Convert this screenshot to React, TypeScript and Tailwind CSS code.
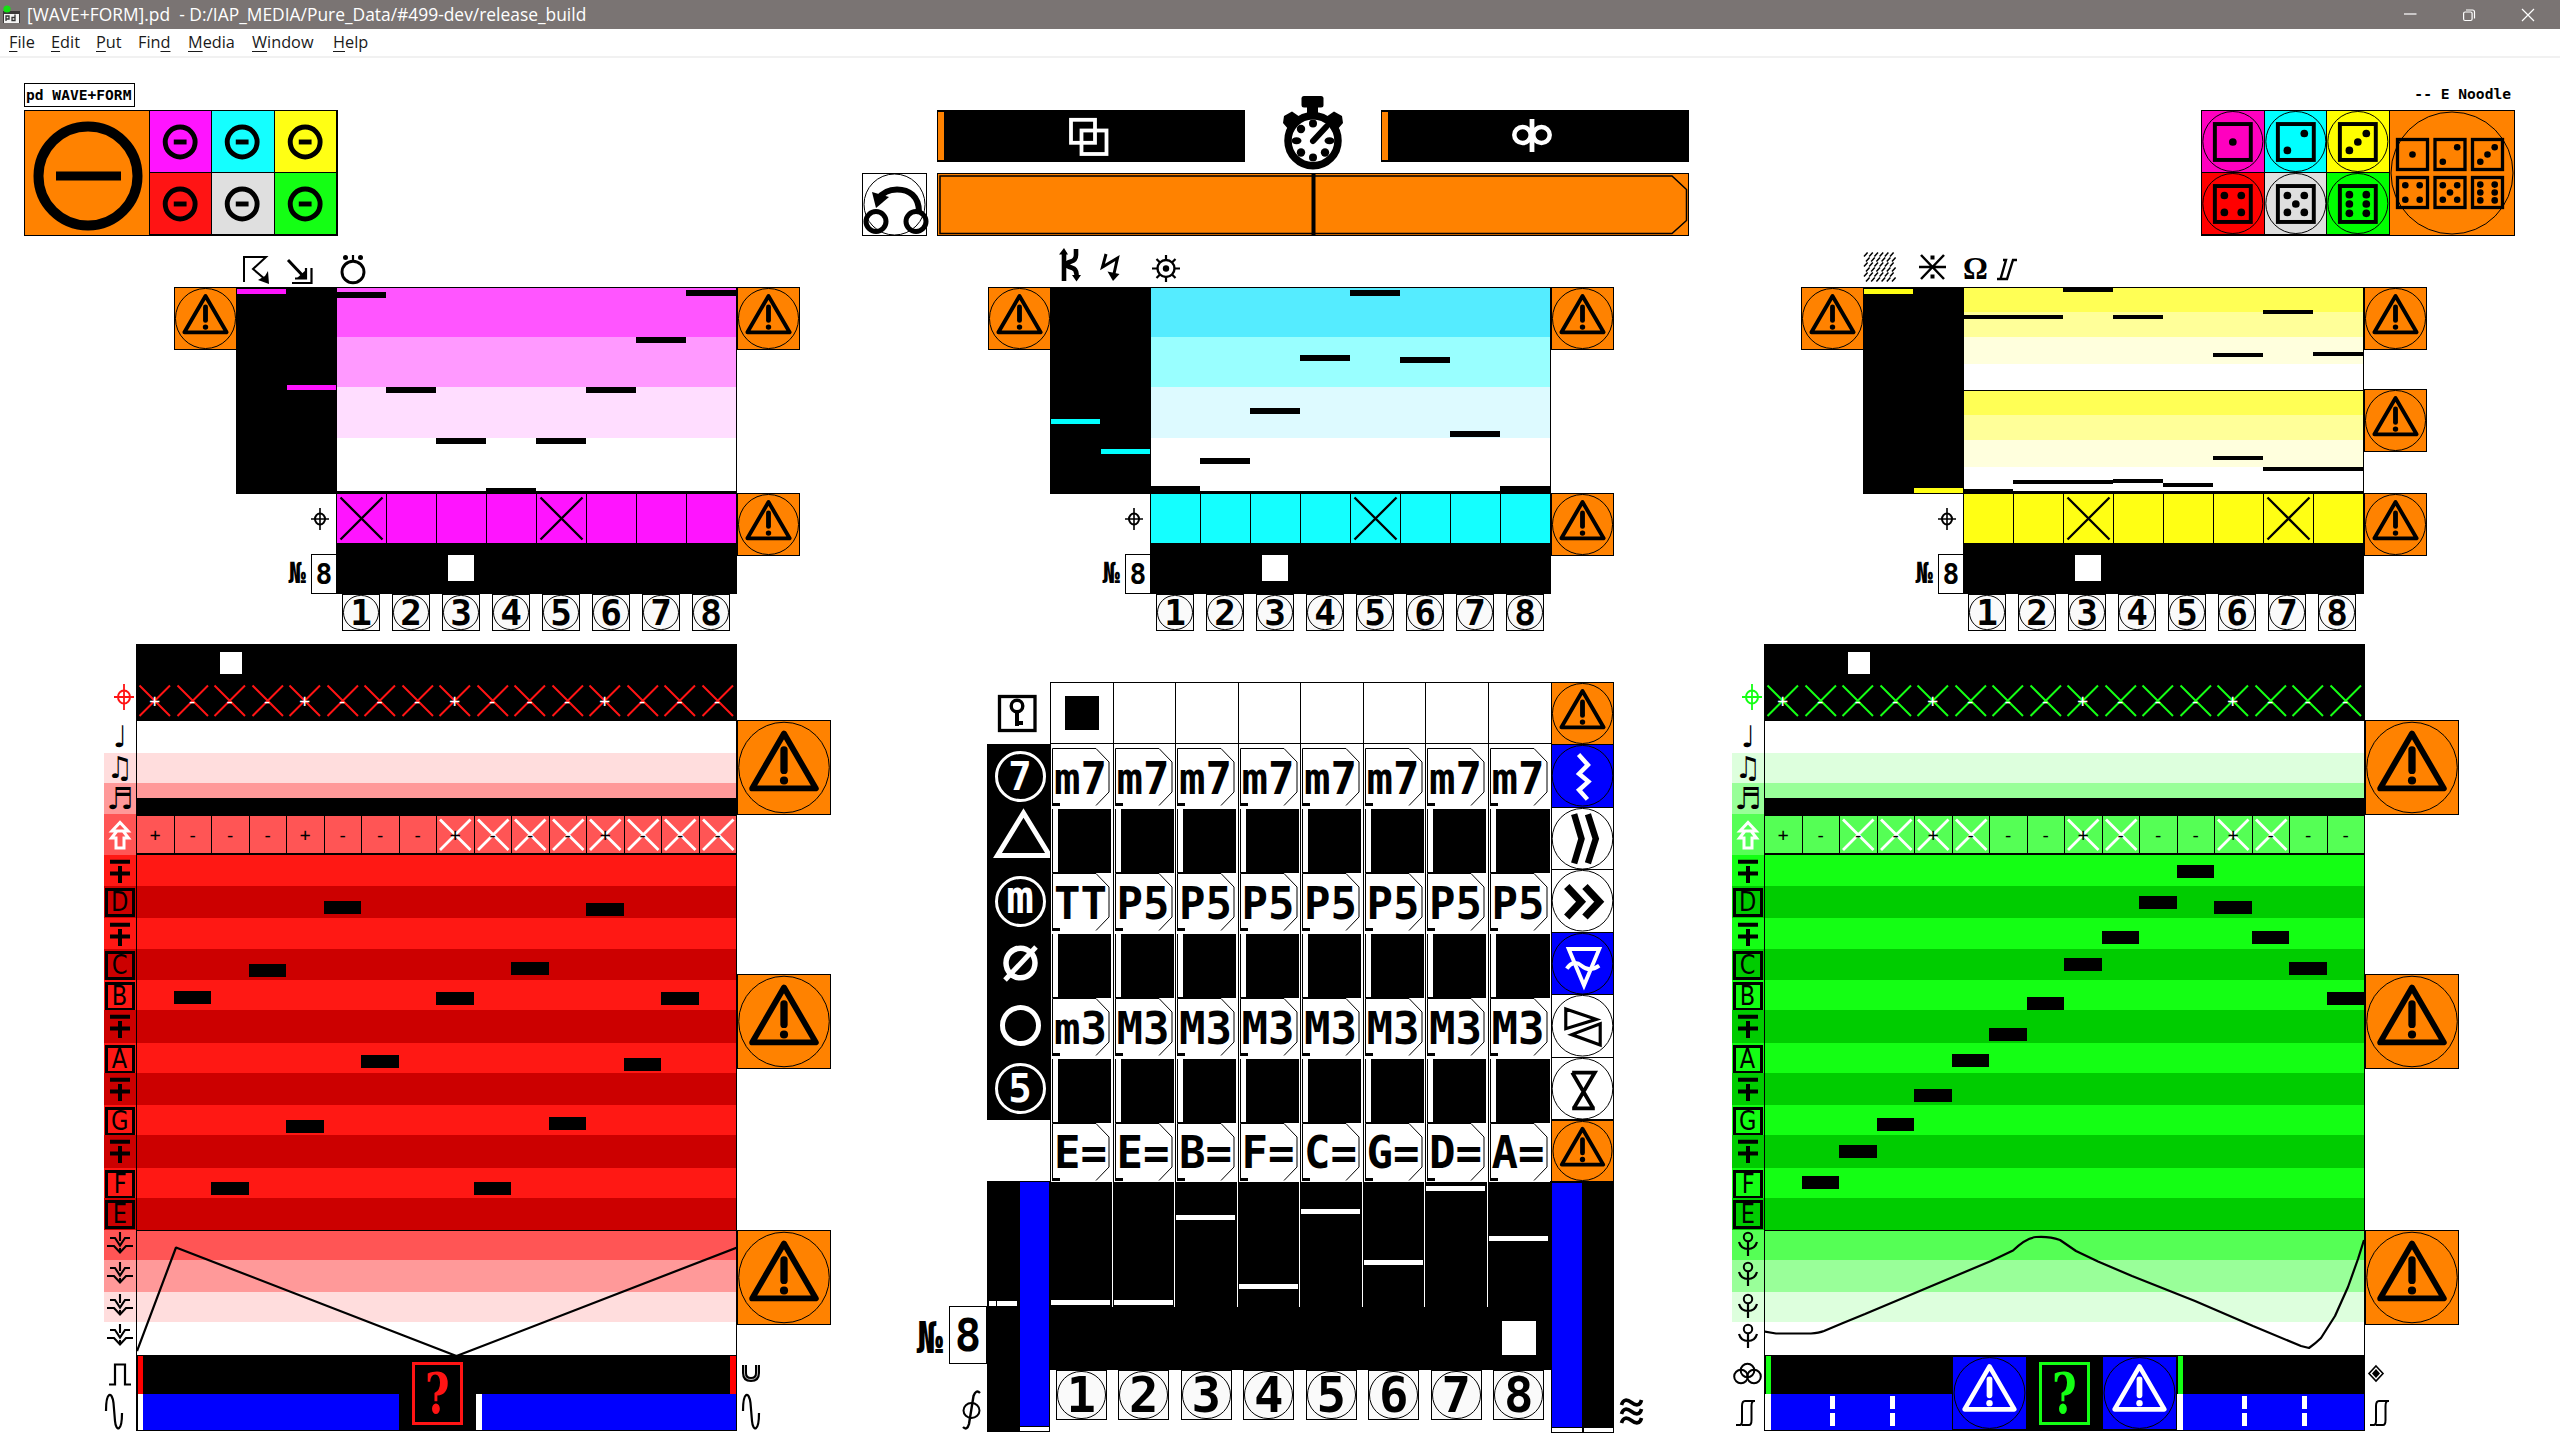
import React from "react";

type Kids = { children?: React.ReactNode };

/* ---------- small drawings ---------- */

function Glyph({ w, h, className = "", children }: { w: number; h: number; className?: string } & Kids) {
  return (
    <svg
      width={w}
      height={h}
      viewBox={`0 0 ${w} ${h}`}
      fill="none"
      stroke="currentColor"
      strokeWidth="2"
      className={`block shrink-0 overflow-visible ${className}`}
    >
      {children}
    </svg>
  );
}

function Warn({ className }: { className: string }) {
  return (
    <div className={`shrink-0 border border-black ${className}`}>
      <svg viewBox="0 0 63 63" className="block size-full" fill="none" stroke="currentColor">
        <circle cx="31.5" cy="31.5" r="31" stroke="#000" strokeWidth="1" vectorEffect="non-scaling-stroke" />
        <path d="M31.5 8.2 53.3 45.8H9.7Z" strokeWidth="4" strokeLinejoin="round" />
        <path d="M31.5 19.5V33.5" strokeWidth="5" strokeLinecap="round" />
        <circle cx="31.5" cy="40.4" r="2.8" fill="currentColor" stroke="none" />
      </svg>
    </div>
  );
}

function Crosshair({ className = "" }: { className?: string }) {
  return (
    <Glyph w={18} h={22} className={className}>
      <ellipse cx="9" cy="11" rx="5" ry="5.5" strokeWidth="2" />
      <path d="M0 11H18M9 0V22" strokeWidth="1.6" />
    </Glyph>
  );
}

const pips: Record<number, number[][]> = {
  1: [[0, 0]],
  2: [[1, -1], [-1, 1]],
  3: [[1, -1], [0, 0], [-1, 1]],
  4: [[-1, -1], [1, -1], [-1, 1], [1, 1]],
  5: [[-1, -1], [1, -1], [0, 0], [-1, 1], [1, 1]],
  6: [[-1, -1.1], [1, -1.1], [-1, 0], [1, 0], [-1, 1.1], [1, 1.1]],
};

function Die({ n, cx, cy, size, gap, r, sw }: { n: number; cx: number; cy: number; size: number; gap: number; r: number; sw: number }) {
  return (
    <g>
      <rect x={cx - size / 2} y={cy - size / 2} width={size} height={size} strokeWidth={sw} />
      {pips[n].map(([px, py], i) => (
        <circle key={i} cx={cx + px * gap} cy={cy + py * gap} r={r} fill="currentColor" stroke="none" />
      ))}
    </g>
  );
}

/* ---------- window chrome ---------- */

function TitleBar() {
  return (
    <div className="flex h-[29px] items-center bg-[#7a7473] text-white">
      <svg width="20" height="20" viewBox="0 0 20 20" className="ml-[2px] block">
        <rect x="1" y="6" width="17" height="12" fill="#3b3838" />
        <rect x="2" y="9" width="15" height="9" fill="#f4f4f4" />
        <circle cx="5" cy="4" r="3.6" fill="#14e014" />
        <path d="M4 16v-5h3v3H4M13 9.500v6h-3v-3h3" fill="none" stroke="#333" strokeWidth="1.3" />
      </svg>
      <span className="ml-[5px] whitespace-pre font-['Open_Sans',sans-serif] text-[17.400px] leading-none">
        {"[WAVE+FORM].pd  - D:/IAP_MEDIA/Pure_Data/#499-dev/release_build"}
      </span>
      <div className="ml-auto flex items-center">
        <Glyph w={13} h={13} className="mr-[46px]"><path d="M0 6H12.500" strokeWidth="1.2" /></Glyph>
        <Glyph w={12} h={12} className="mr-[47px]">
          <rect x=".6" y="3" width="8.500" height="8.500" rx="1.500" strokeWidth="1.200" />
          <path d="M3 1H9.500Q11.500 1 11.500 3V9.500" strokeWidth="1.200" />
        </Glyph>
        <Glyph w={12} h={12} className="mr-[26px]"><path d="M0 0 12 12M12 0 0 12" strokeWidth="1.2" /></Glyph>
      </div>
    </div>
  );
}

const menus = [
  { a: "", u: "F", b: "ile", w: "w-[42px]" },
  { a: "", u: "E", b: "dit", w: "w-[45px]" },
  { a: "", u: "P", b: "ut", w: "w-[42px]" },
  { a: "Fin", u: "d", b: "", w: "w-[50px]" },
  { a: "", u: "M", b: "edia", w: "w-[64px]" },
  { a: "", u: "W", b: "indow", w: "w-[81px]" },
  { a: "", u: "H", b: "elp", w: "w-[50px]" },
];

function MenuBar() {
  return (
    <div className="flex h-[29px] items-center border-b-2 border-[#f1f1f1] bg-white pl-[9px] font-['Open_Sans',sans-serif] text-[16.300px] leading-none text-[#1a1a1a]">
      {menus.map((m) => (
        <span key={m.u} className={`${m.w} whitespace-nowrap`}>
          {m.a}
          <span className="underline decoration-1 underline-offset-[3px]">{m.u}</span>
          {m.b}
        </span>
      ))}
    </div>
  );
}

/* ---------- header strip ---------- */

function MinusCell({ className }: { className: string }) {
  return (
    <div className={`border-b border-r border-black ${className}`}>
      <svg viewBox="0 0 62 62" className="block size-full" fill="none" stroke="#000">
        <circle cx="30.5" cy="31.500" r="15.200" strokeWidth="5" />
        <path d="M24 31.500H37" strokeWidth="5" />
      </svg>
    </div>
  );
}

function DieCell({ n, className }: { n: number; className: string }) {
  return (
    <div className={`border-b border-r border-black ${className}`}>
      <svg viewBox="0 0 62 62" className="block size-full" fill="none" stroke="#000">
        <circle cx="31" cy="31" r="30.500" strokeWidth="1" />
        <Die n={n} cx={31} cy={31.500} size={36.500} gap={8.600} r={3.900} sw={4} />
      </svg>
    </div>
  );
}

function HeaderStrip() {
  return (
    <div className="flex h-[178px] items-end">
      <div className="ml-[24px] w-[314px]">
        <div className="mb-[3px] inline-flex h-[24px] w-[111px] items-center border border-black whitespace-pre pl-px font-['DejaVu_Sans_Mono',monospace] text-[14.600px] font-bold leading-none">
          pd WAVE+FORM
        </div>
        <div className="flex h-[126px] border border-black">
          <div className="w-[125px] border-r border-black bg-[#ff8200]">
            <svg viewBox="0 0 124 124" className="block size-full" fill="none" stroke="#000">
              <circle cx="63" cy="65" r="49.500" strokeWidth="10" />
              <path d="M31 65H96" strokeWidth="9" />
            </svg>
          </div>
          <div className="grid flex-1 grid-cols-3 grid-rows-2">
            <MinusCell className="bg-[#ff14ff]" />
            <MinusCell className="bg-[#14ffff]" />
            <MinusCell className="bg-[#ffff14]" />
            <MinusCell className="bg-[#ff1414]" />
            <MinusCell className="bg-[#dfdfdf]" />
            <MinusCell className="bg-[#14ff14]" />
          </div>
        </div>
      </div>

      <div className="ml-[524px] flex h-[140px] items-end gap-[11px]">
        <div className="h-[63px] w-[65px] border border-black bg-white">
          <Glyph w={63} h={61}>
            <circle cx="31.500" cy="30.500" r="30.500" strokeWidth="1" />
            <circle cx="13" cy="47.500" r="10" strokeWidth="5" />
            <circle cx="53" cy="47.500" r="10" strokeWidth="5" />
            <path d="M56 38C56 22 46 15.500 34 15.500 26 15.500 20 18 15 25" strokeWidth="6" />
            <path d="M9 18 26 23 13 34Z" fill="currentColor" stroke="none" />
          </Glyph>
        </div>
        <div className="-ml-px flex w-[752px] flex-col">
          <div className="flex h-[77px] items-start justify-between">
            <div className="mt-[14px] flex h-[52px] w-[308px] items-center border border-black bg-black text-white">
              <div className="h-[48px] w-[6px] bg-[#ff8200]" />
              <Glyph w={40} h={38} className="ml-[125px] mt-[1px]">
                <rect x="2" y="1.800" width="24" height="23" strokeWidth="3.800" />
                <rect x="12.500" y="12.500" width="25" height="23.500" strokeWidth="3.800" />
              </Glyph>
            </div>
            <Glyph w={60} h={74}>
              <g fill="currentColor" stroke="none">
                <rect x="18.500" y="0" width="22" height="11.500" rx="2.500" />
                <rect x="24" y="9" width="11" height="12" />
                <path d="M1 20 9 15.500 17 21 6 34 0 27ZM59 20 51 15.500 43 21 54 34 60 27Z" />
              </g>
              <circle cx="30" cy="44.700" r="25" strokeWidth="7.500" />
              <g fill="currentColor" stroke="none">
                <circle cx="30" cy="27.500" r="4" />
                <circle cx="30" cy="61.500" r="4" />
                <ellipse cx="46.500" cy="44.700" rx="5" ry="3.500" />
                <ellipse cx="13.500" cy="44.700" rx="5" ry="3.500" />
                <circle cx="18" cy="33" r="4.200" />
                <circle cx="18" cy="56.500" r="4.200" />
                <circle cx="42" cy="56.500" r="4.200" />
              </g>
              <path d="M30 45 43 31" strokeWidth="6" strokeLinecap="round" />
            </Glyph>
            <div className="mt-[14px] flex h-[52px] w-[308px] items-center border border-black bg-black text-white">
              <div className="h-[48px] w-[6px] bg-[#ff8200]" />
              <Glyph w={40} h={34} className="ml-[124px]">
                <ellipse cx="10.500" cy="16" rx="8.200" ry="8" strokeWidth="4.500" />
                <ellipse cx="29.500" cy="16" rx="8.200" ry="8" strokeWidth="4.500" />
                <path d="M20 0V33" strokeWidth="4.800" />
              </Glyph>
            </div>
          </div>
          <div className="h-[63px] border border-black bg-[#ff8200]">
            <Glyph w={750} h={61}>
              <path d="M2 2H734L748.500 15.500V46.500L734 59.500H2Z" strokeWidth="1.500" />
              <path d="M375.500 0V61" strokeWidth="4" />
            </Glyph>
          </div>
        </div>
      </div>

      <div className="ml-[512px] w-[314px]">
        <div className="mb-[8px] whitespace-pre pr-[4px] text-right font-['DejaVu_Sans_Mono',monospace] text-[14.600px] font-bold leading-none">
          -- E Noodle
        </div>
        <div className="flex h-[126px] border border-black">
          <div className="grid w-[188px] grid-cols-3 grid-rows-2">
            <DieCell n={1} className="bg-[#ff00bf]" />
            <DieCell n={2} className="bg-[#00ffff]" />
            <DieCell n={3} className="bg-[#ffff00]" />
            <DieCell n={4} className="bg-[#ff0000]" />
            <DieCell n={5} className="bg-[#dfdfdf]" />
            <DieCell n={6} className="bg-[#00ff00]" />
          </div>
          <div className="flex-1 bg-[#ff8200]">
            <svg viewBox="0 0 124 124" className="block size-full" fill="none" stroke="#000">
              <circle cx="62" cy="62" r="61" strokeWidth="1" />
              {[1, 2, 3, 4, 5, 6].map((n) => (
                <Die key={n} n={n} cx={22.500 + ((n - 1) % 3) * 37.500} cy={n < 4 ? 43.500 : 81.500} size={30} gap={7.200} r={3.300} sw={3.300} />
              ))}
            </svg>
          </div>
        </div>
      </div>
    </div>
  );
}

/* ---------- eight step modulators ---------- */

type Bar = { step: number; y: number; span?: number };

type Mod = {
  tick: string;
  toggle: string;
  numbers: string;
  glyphs: React.ReactNode;
  knobs: number[];
  graphs: { h: string; bands: string[]; bars: Bar[]; bar: string }[];
  crossed: number[];
};

function StepNumber({ n, className }: { n: number; className: string }) {
  return (
    <div className={`relative flex items-center justify-center border border-black bg-[#fafafa] font-['DejaVu_Sans_Mono',monospace] font-bold leading-none ${className}`}>
      <div className="absolute inset-0 rounded-full border border-black" />
      {n}
    </div>
  );
}

function Modulator({ m }: { m: Mod }) {
  return (
    <div>
      <div className="flex h-[51px] items-start text-black">{m.glyphs}</div>
      <div className="flex items-start pl-[174px]">
        <div className="w-[163px]">
          <div className="flex items-start">
            <Warn className="size-[63px] bg-[#ff8200]" />
            <div className="relative -ml-px h-[207px] w-[101px] bg-black">
              {m.knobs.map((y, i) => (
                <div key={i} className={`absolute h-[5px] w-[49px] ${m.tick}`} style={{ top: y, left: i * 50 + 1 }} />
              ))}
            </div>
          </div>
          <div className="flex h-[50px] items-center justify-end pr-[8px]"><Crosshair /></div>
          <div className="flex items-end justify-end font-['DejaVu_Sans_Mono',monospace] font-bold leading-none">
            <span className="mb-[6px] mr-[5px] text-[29px]">№</span>
            <div className="mt-[10px] flex h-[40px] w-[26px] items-center justify-center border border-black pt-[2px] text-[28px]">8</div>
          </div>
        </div>
        <div className="-ml-px w-[401px]">
          <div className="flex h-[206px] flex-col border-x border-b-2 border-t border-black">
            {m.graphs.map((g, gi) => (
              <div key={gi} className={`relative ${g.h} ${gi > 0 ? "border-t border-black" : ""}`}>
                {g.bands.map((b, i) => <div key={i} className={b} />)}
                {g.bars.map((b) => (
                  <div key={b.step} className={`absolute bg-black ${g.bar}`} style={{ left: b.step * 50 - 1, top: b.y, width: (b.span ?? 1) * 50 }} />
                ))}
              </div>
            ))}
          </div>
          <div className="grid h-[50px] grid-cols-[repeat(8,50px)] border-r border-black">
            {Array.from({ length: 8 }, (_, i) => (
              <div key={i} className={`border-l border-t border-black ${m.toggle}`}>
                {m.crossed.includes(i) && (
                  <Glyph w={49} h={49}><path d="M3.500 3.500 45.500 45.500M45.500 3.500 3.500 45.500" strokeWidth="2.300" /></Glyph>
                )}
              </div>
            ))}
          </div>
          <div className="flex h-[51px] bg-black pl-[112px] pt-[12px]">
            <div className="size-[26px] bg-white" />
          </div>
          <div className={`grid w-[400px] grid-cols-8 justify-items-center ${m.numbers}`}>
            {Array.from({ length: 8 }, (_, i) => (
              <StepNumber key={i} n={i + 1} className="h-[37px] w-[38px] text-[36px]" />
            ))}
          </div>
        </div>
        <div>
          <Warn className="size-[63px] bg-[#ff8200]" />
          {m.graphs.length === 2 ? (
            <>
              <Warn className="mt-[39px] size-[63px] bg-[#ff8200]" />
              <Warn className="mt-[41px] size-[63px] bg-[#ff8200]" />
            </>
          ) : (
            <Warn className="mt-[143px] size-[63px] bg-[#ff8200]" />
          )}
        </div>
      </div>
    </div>
  );
}

const modulators: Mod[] = [
  {
    tick: "bg-[#ff14ff]",
    toggle: "bg-[#ff14ff]",
    numbers: "",
    knobs: [2, 98],
    crossed: [0, 4],
    graphs: [
      {
        h: "h-[203px]",
        bar: "h-[6px]",
        bands: ["h-[49px] bg-[#ff55ff]", "h-[50px] bg-[#ff99ff]", "h-[51px] bg-[#ffddff]", "h-[53px] bg-white"],
        bars: [
          { step: 0, y: 4 }, { step: 1, y: 99 }, { step: 2, y: 150 }, { step: 3, y: 200 },
          { step: 4, y: 150 }, { step: 5, y: 99 }, { step: 6, y: 49 }, { step: 7, y: 2 },
        ],
      },
    ],
    glyphs: (
      <>
        <Glyph w={27} h={28} className="ml-[242px] mt-[20px]">
          <path d="M2 26V1H24L11 13 24 24" strokeWidth="2" />
          <path d="M27 28 26 15 23 20 16 24Z" fill="currentColor" stroke="none" />
        </Glyph>
        <Glyph w={26} h={25} className="ml-[18px] mt-[23px]">
          <path d="M1 1 18 19" strokeWidth="3" />
          <path d="M24.500 9V24H5M19 9V19.500H8" strokeWidth="2.200" />
          <path d="M20 10V20H9Z" fill="currentColor" stroke="none" />
        </Glyph>
        <Glyph w={26} h={29} className="ml-[27px] mt-[19px]">
          <ellipse cx="13" cy="17" rx="11" ry="10.800" strokeWidth="2.900" />
          <path d="M13 0V6" strokeWidth="2.200" />
          <circle cx="5.500" cy="2.500" r="2.500" fill="currentColor" stroke="none" />
          <circle cx="20.500" cy="2.500" r="2.500" fill="currentColor" stroke="none" />
        </Glyph>
      </>
    ),
  },
  {
    tick: "bg-[#00ffff]",
    toggle: "bg-[#14ffff]",
    numbers: "",
    knobs: [132, 162],
    crossed: [4],
    graphs: [
      {
        h: "h-[203px]",
        bar: "h-[6px]",
        bands: ["h-[49px] bg-[#55ecff]", "h-[50px] bg-[#99ffff]", "h-[51px] bg-[#ddfaff]", "h-[53px] bg-white"],
        bars: [
          { step: 0, y: 198 }, { step: 1, y: 170 }, { step: 2, y: 120 }, { step: 3, y: 67 },
          { step: 4, y: 2 }, { step: 5, y: 69 }, { step: 6, y: 143 }, { step: 7, y: 198 },
        ],
      },
    ],
    glyphs: (
      <>
        <Glyph w={21} h={33} className="ml-[246px] mt-[12px]">
          <path d="M4 33V4M16 1V7Q16 12 11 13.500T6 17Q9 19 12.500 20T16.500 26V30" strokeWidth="4.600" />
          <path d="M-1 6.500 4 0 8 6.500ZM12 27H21L16.500 33.500Z" fill="currentColor" stroke="none" />
        </Glyph>
        <Glyph w={18} h={26} className="ml-[20px] mt-[18px]">
          <path d="M5 0 1.500 13 16.500 4 12.500 22" strokeWidth="3" />
          <path d="M6.500 17.500 18.500 20 12 27Z" fill="currentColor" stroke="none" />
        </Glyph>
        <Glyph w={28} h={27} className="ml-[33px] mt-[19px]">
          <circle cx="14" cy="13.500" r="8.500" strokeWidth="2.400" />
          <circle cx="14" cy="13.500" r="3.200" fill="currentColor" stroke="none" />
          <path d="M14 0V5M14 22V27M0 13.500H5M23 13.500H28M4.500 4 8 7.500M20 19.500 23.500 23M23.500 4 20 7.500M8 19.500 4.500 23" strokeWidth="2.200" />
        </Glyph>
      </>
    ),
  },
  {
    tick: "bg-[#ffff14]",
    toggle: "bg-[#ffff14]",
    numbers: "-ml-px",
    knobs: [2, 201],
    crossed: [2, 6],
    graphs: [
      {
        h: "h-[102px]",
        bar: "h-[4px]",
        bands: ["h-[24px] bg-[#ffff55]", "h-[25px] bg-[#ffff99]", "h-[27px] bg-[#ffffdd]", "h-[26px] bg-white"],
        bars: [
          { step: 0, y: 27, span: 2 }, { step: 2, y: 0 }, { step: 3, y: 27 }, { step: 5, y: 65 },
          { step: 6, y: 22 }, { step: 7, y: 64 },
        ],
      },
      {
        h: "h-[101px]",
        bar: "h-[4px]",
        bands: ["h-[24px] bg-[#ffff55]", "h-[25px] bg-[#ffff99]", "h-[27px] bg-[#ffffdd]", "h-[24px] bg-white"],
        bars: [
          { step: 0, y: 98 }, { step: 1, y: 89, span: 2 }, { step: 3, y: 88 }, { step: 4, y: 92 },
          { step: 5, y: 65 }, { step: 6, y: 76, span: 2 },
        ],
      },
    ],
    glyphs: (
      <>
        <Glyph w={32} h={30} className="ml-[237px] mt-[16px]">
          {[0, 1, 2, 3, 4, 5].map((r) =>
            [0, 1, 2, 3, 4, 5].map((c) => (
              <path key={`${r}${c}`} d={`M${c * 5.2 + (r % 2) * 2} ${r * 5 + 4.500}l3.600-4`} strokeWidth="1.500" />
            )),
          )}
        </Glyph>
        <Glyph w={27} h={26} className="ml-[23px] mt-[18px]">
          <path d="M2 1 25 25M25 1 2 25M0 13H27" strokeWidth="2.500" />
          <path d="M11.500 1.500h4v4h-4zM11.500 20.500h4v4h-4z" fill="currentColor" stroke="none" />
        </Glyph>
        <span className="ml-[17px] mt-[15px] w-[25px] font-['Liberation_Serif',serif] text-[31px] font-bold leading-[35px]">Ω</span>
        <Glyph w={21} h={21} className="ml-[8px] mt-[23px]">
          <path d="M7 1H10L4.500 20H1M4.500 20H11L17 1H21" strokeWidth="2.400" />
        </Glyph>
      </>
    ),
  },
];

/* ---------- sixteen step sequencers ---------- */

type Seq = {
  pad: string;
  color: string;
  bright: string;
  dark: string;
  bands: [string, string, string];
  leaf: React.ReactNode;
  crossed: number[];
  bars: [number, number][];
  curve: string;
  icons: { tl: React.ReactNode; bl: React.ReactNode; tr: React.ReactNode; br: React.ReactNode };
  foot: React.ReactNode;
};

const noteRows = [
  { n: "", h: "h-[31px]", hi: true }, { n: "D", h: "h-[32px]", hi: false },
  { n: "", h: "h-[31px]", hi: true }, { n: "C", h: "h-[31px]", hi: false },
  { n: "B", h: "h-[30px]", hi: true }, { n: "", h: "h-[33px]", hi: false },
  { n: "A", h: "h-[30px]", hi: true }, { n: "", h: "h-[32px]", hi: false },
  { n: "G", h: "h-[30px]", hi: true }, { n: "", h: "h-[33px]", hi: false },
  { n: "F", h: "h-[30px]", hi: true }, { n: "E", h: "h-[32px]", hi: false },
];

function Sequencer({ s }: { s: Seq }) {
  return (
    <div className={`mt-[13px] flex items-start ${s.pad}`}>
      <div className="flex w-[32px] shrink-0 flex-col items-stretch font-['DejaVu_Sans',sans-serif] text-black">
        <div className={`flex h-[76px] items-start justify-center pl-[8px] pt-[40px] ${s.color}`}>
          <Glyph w={20} h={26}>
            <ellipse cx="10" cy="13" rx="6" ry="6.500" strokeWidth="2" />
            <path d="M0 13H20M10 0V26" strokeWidth="1.800" />
          </Glyph>
        </div>
        <div className="flex h-[33px] items-center justify-center text-[30px] leading-none">♩</div>
        <div className={`flex h-[30px] items-center justify-center text-[30px] leading-none ${s.bands[2]}`}>♫</div>
        <div className={`flex h-[31px] items-center justify-center text-[30px] leading-none ${s.bands[1]}`}>♬</div>
        <div className={`flex h-[41px] items-center justify-center text-white ${s.bands[0]}`}>
          <Glyph w={22} h={28}>
            <path d="M7 27V17H2.500L8 10H3L11 1.500 19 10H14L19.500 17H15V27Z M7.500 10H14.500" strokeWidth="3" />
          </Glyph>
        </div>
        {noteRows.map((r, i) => (
          <div key={i} className={`flex items-start justify-center ${r.h} ${r.hi ? s.bright : s.dark}`}>
            {r.n ? (
              <div className="mt-[2px] flex h-[29px] w-[30px] items-center justify-center border-[3px] border-black text-[25px] leading-none">
                <span className="scale-x-90 scale-y-105">{r.n}</span>
              </div>
            ) : (
              <Glyph w={20} h={24} className="mt-[5px]"><path d="M0 1.700H20M0 13.500H20M10 6V23" strokeWidth="4" /></Glyph>
            )}
          </div>
        ))}
        {["h-[30px]", "h-[32px]", "h-[30px]", "h-[33px]"].map((h, i) => (
          <div key={i} className={`flex items-start justify-center pt-[2px] ${h} ${i < 3 ? s.bands[i] : ""}`}>{s.leaf}</div>
        ))}
        <div className="h-[38px] pt-[8px]">{s.icons.tl}</div>
        <div className="h-[37px]">{s.icons.bl}</div>
      </div>

      <div className="w-[601px] shrink-0">
        <div className="h-[38px] bg-black pl-[84px] pt-[8px]"><div className="size-[22px] bg-white" /></div>
        <div className="grid h-[38px] grid-cols-[repeat(16,37.5px)] bg-black">
          {Array.from({ length: 16 }, (_, i) => (
            <div key={i} className={`relative ${s.color}`}>
              <Glyph w={37} h={38}><path d="M3.500 3.500 34 34M34 3.500 3.500 34" strokeWidth="2" /></Glyph>
              <div className="absolute inset-0 flex items-center justify-center font-['DejaVu_Sans_Mono',monospace] text-[18px] leading-none text-white">
                {i % 4 === 0 ? "+" : "-"}
              </div>
            </div>
          ))}
        </div>
        <div className="h-[96px] border-x border-t border-black">
          <div className="h-[32px] bg-white" />
          <div className={`h-[30px] ${s.bands[2]}`} />
          <div className={`h-[15px] ${s.bands[1]}`} />
          <div className="h-[18px] bg-black" />
        </div>
        <div className="grid h-[39px] grid-cols-[repeat(16,37.5px)] border-b-2 border-r border-black">
          {Array.from({ length: 16 }, (_, i) => (
            <div key={i} className={`relative border-l border-black text-white ${s.bands[0]}`}>
              {s.crossed.includes(i) && (
                <Glyph w={37} h={37}><path d="M3 3.500 33.500 34M33.500 3.500 3 34" strokeWidth="2.800" /></Glyph>
              )}
              <div className="absolute inset-0 flex items-center justify-center font-['DejaVu_Sans_Mono',monospace] text-[18px] leading-none text-black">
                {i % 4 === 0 ? "+" : "-"}
              </div>
            </div>
          ))}
        </div>
        <div className="relative border-x border-black">
          {noteRows.map((r, i) => <div key={i} className={`${r.h} ${r.hi ? s.bright : s.dark}`} />)}
          {s.bars.map(([step, y]) => (
            <div key={step} className="absolute h-[13px] w-[37.5px] bg-black" style={{ left: step * 37.5 - 1, top: y - 855 }} />
          ))}
        </div>
        <div className="relative h-[125px] border-x border-t border-black">
          <div className={`h-[29px] ${s.bands[0]}`} />
          <div className={`h-[32px] ${s.bands[1]}`} />
          <div className={`h-[30px] ${s.bands[2]}`} />
          <svg className="absolute inset-0 block" width="600" height="125" viewBox="1 1 600 125" fill="none" stroke="#000" strokeWidth="2.200">
            <path d={s.curve} strokeLinejoin="bevel" />
          </svg>
        </div>
        {s.foot}
      </div>

      <div className="pt-[76px]">
        <Warn className="h-[95px] w-[94px] bg-[#ff8200]" />
        <Warn className="mt-[159px] h-[95px] w-[94px] bg-[#ff8200]" />
        <Warn className="mt-[161px] h-[95px] w-[94px] bg-[#ff8200]" />
        <div className="mt-[30px] h-[38px] pl-[4px] pt-[10px]">{s.icons.tr}</div>
        <div className="h-[37px] pl-[5px]">{s.icons.br}</div>
      </div>
    </div>
  );
}

function Question({ className, box }: { className: string; box: string }) {
  return (
    <div className={`flex h-full shrink-0 items-center justify-center bg-black ${className}`}>
      <div className={`flex h-[63px] w-[51px] items-center justify-center border-[3px] font-['DejaVu_Serif',serif] text-[56px] font-bold leading-none ${box}`}>
        <span className="scale-x-75">?</span>
      </div>
    </div>
  );
}

const Sine = () => (
  <Glyph w={18} h={34}>
    <path d="M1 16C1 -4 7 -4 8.500 8L10 26C11 37 17 37 17 18" strokeWidth="2.200" />
  </Glyph>
);

const Hysteresis = () => (
  <Glyph w={19} h={26}>
    <path d="M0 25H4Q6 25 6 21V6Q6 1 9 1H19M8 25H13Q15.500 25 15.500 20V6Q15.500 1 18 1M6 25H12" strokeWidth="2" />
  </Glyph>
);

const redFoot = (
  <div className="flex h-[76px] border border-black">
    <div className="w-[262px]">
      <div className="flex h-[38px] bg-black pl-px"><div className="w-[5px] bg-[#ff0000]" /></div>
      <div className="flex h-[36px]"><div className="w-[6px] border-l border-black bg-white" /><div className="flex-1 bg-[#0000ff]" /></div>
    </div>
    <Question className="w-[76px]" box="border-[#ff1414] text-[#ff1414]" />
    <div className="flex-1">
      <div className="flex h-[38px] justify-end bg-black"><div className="w-[6px] bg-[#ff0000]" /></div>
      <div className="flex h-[36px]"><div className="w-[7px] border-l border-black bg-white" /><div className="flex-1 bg-[#0000ff]" /></div>
    </div>
  </div>
);

function Dashes() {
  return (
    <div className="flex w-[5px] flex-col gap-[4px] pt-[2px]">
      <div className="h-[13px] bg-white" />
      <div className="h-[13px] bg-white" />
    </div>
  );
}

function GreenHalf() {
  return (
    <div className="w-[187px]">
      <div className="flex h-[38px] bg-black pl-px"><div className="w-[5px] bg-[#14ff14]" /></div>
      <div className="flex h-[36px] bg-[#0000ff]">
        <div className="mr-[59px] w-[6px] bg-white" />
        <Dashes />
        <div className="w-[55px]" />
        <Dashes />
      </div>
    </div>
  );
}

const greenFoot = (
  <div className="flex h-[76px] border border-black">
    <GreenHalf />
    <Warn className="h-[74px] w-[75px] bg-[#0000ff] text-white" />
    <Question className="w-[75px]" box="border-[#14ff14] text-[#14ff14]" />
    <Warn className="h-[74px] w-[75px] bg-[#0000ff] text-white" />
    <GreenHalf />
  </div>
);

const sequencers: Seq[] = [
  {
    pad: "pl-[104px]",
    color: "text-[#ff1414]",
    bright: "bg-[#ff1814]",
    dark: "bg-[#cc0000]",
    bands: ["bg-[#ff5555]", "bg-[#ff9999]", "bg-[#ffdddd]"],
    leaf: (
      <Glyph w={26} h={22}>
        <path d="M13 0V9M3 6H8L13 13.500 18 6H23M0 14H7L13 20.500 19 14H26M13 16V20" strokeWidth="2.100" />
      </Glyph>
    ),
    crossed: [8, 9, 10, 11, 12, 13, 14, 15],
    bars: [
      [1, 991], [2, 1182], [3, 964], [4, 1120], [5, 901], [6, 1055], [8, 992],
      [9, 1182], [10, 962], [11, 1117], [12, 903], [13, 1058], [14, 992],
    ],
    curve: "M1 121 40 17.500 320.500 126 601 17.500",
    icons: {
      tl: <Glyph w={22} h={23} className="ml-[5px]"><path d="M0 21.500H6V1.500H16V21.500H22" strokeWidth="2.200" /></Glyph>,
      bl: <div className="pl-px pt-[2px]"><Sine /></div>,
      tr: (
        <Glyph w={20} h={17}>
          <path d="M3.500 0V8Q3.500 14.500 10 14.500T16.500 8V0" strokeWidth="5" />
          <path d="M3.500 0V8Q3.500 14.500 10 14.500T16.500 8V0" strokeWidth="1" stroke="#bbb" />
        </Glyph>
      ),
      br: <div className="pt-[2px]"><Sine /></div>,
    },
    foot: redFoot,
  },
  {
    pad: "pl-[105px]",
    color: "text-[#14ff14]",
    bright: "bg-[#14ff14]",
    dark: "bg-[#00cc00]",
    bands: ["bg-[#55ff55]", "bg-[#99ff99]", "bg-[#ddffdd]"],
    leaf: (
      <Glyph w={20} h={24}>
        <circle cx="10" cy="5" r="4.200" strokeWidth="2" />
        <path d="M10 9V24M1 10Q3 17 10 17T19 10" strokeWidth="2.200" />
      </Glyph>
    ),
    crossed: [2, 3, 4, 5, 8, 9, 12, 13],
    bars: [
      [1, 1176], [2, 1145], [3, 1118], [4, 1089], [5, 1054], [6, 1028], [7, 997], [8, 958],
      [9, 931], [10, 896], [11, 865], [12, 901], [13, 931], [14, 962], [15, 992],
    ],
    curve:
      "M0 101.500 12 103.500H47Q55 103 60 101L79 93 101 84 164 57.500 227 31 249 20.500Q262 8 272 7 285 6 296 10L312 21 334 31.500 368 46 431 71 489 96 537 116 545 118Q552 113 557 108L571 86 584 57 594 29 600 10",
    icons: {
      tl: (
        <Glyph w={29} h={21} className="ml-[1px]">
          <circle cx="8" cy="13.500" r="6.800" /><circle cx="14.500" cy="7.500" r="6.800" /><circle cx="21" cy="13.500" r="6.800" />
        </Glyph>
      ),
      bl: <div className="pl-[4px] pt-[7px]"><Hysteresis /></div>,
      tr: (
        <Glyph w={16} h={17} className="ml-[-1px]">
          <path d="M8 1 15 8.500 8 16 1 8.500Z" strokeWidth="1.600" />
          <path d="M8 4 12 8.500 8 13 4 8.500Z" fill="currentColor" stroke="none" />
        </Glyph>
      ),
      br: <div className="pt-[7px]"><Hysteresis /></div>,
    },
    foot: greenFoot,
  },
];

/* ---------- harmony matrix ---------- */

const chordRows = [
  ["m7", "m7", "m7", "m7", "m7", "m7", "m7", "m7"],
  ["TT", "P5", "P5", "P5", "P5", "P5", "P5", "P5"],
  ["m3", "M3", "M3", "M3", "M3", "M3", "M3", "M3"],
  ["E=", "E=", "B=", "F=", "C=", "G=", "D=", "A="],
];

const levels = [119, 119, 34, 103, 28, 79, 5, 55];

function ChordRow({ cells, lead = "leading-[61px]" }: { cells: string[]; lead?: string }) {
  return (
    <div className="grid h-[58px] grid-cols-[repeat(8,62.5px)]">
      {cells.map((c, i) => (
        <div key={i} className={`relative border-l border-black bg-white pl-[3px] font-['DejaVu_Sans_Mono',monospace] text-[44px] font-bold ${lead}`}>
          <Glyph w={58} h={58} className="absolute left-0 top-0">
            <path d="M1.500 .5H45L58 14V44L45 57.500" strokeWidth="1" />
            <path d="M1.500 .5V58" strokeWidth="1" />
            <path d="M1 56.500H9" strokeWidth="3" />
          </Glyph>
          <span className="relative">{c}</span>
        </div>
      ))}
    </div>
  );
}

function SliderRow() {
  return (
    <div className="grid h-[67px] grid-cols-[repeat(8,62.5px)]">
      {Array.from({ length: 8 }, (_, i) => (
        <div key={i} className="flex border-l border-black bg-white pl-px">
          <div className="w-[6px] border-b border-l border-black bg-white" />
          <div className={`bg-black ${i === 7 ? "flex-1" : "w-[53px]"}`} />
        </div>
      ))}
    </div>
  );
}

function IconCell({ className, children }: { className: string } & Kids) {
  return (
    <div className={`h-[62.5px] w-[63px] border-x border-b border-black ${className}`}>
      <svg viewBox="0 0 62 62" className="block size-full" fill="none" stroke="currentColor">
        <circle cx="31" cy="31" r="30.800" stroke="#000" strokeWidth="1" />
        {children}
      </svg>
    </div>
  );
}

function Disc({ children, className }: { className: string } & Kids) {
  return (
    <div className="flex h-[62.5px] items-center justify-center pl-[3px] pt-[2px]">
      <div className={`flex size-[51px] items-center justify-center rounded-full border-[3px] border-white font-['DejaVu_Sans_Mono',monospace] font-bold leading-none ${className}`}>
        {children}
      </div>
    </div>
  );
}

function Harmony() {
  return (
    <div className="mt-[51px] flex items-start pl-[104px]">
      <div className="w-[69px] shrink-0 pt-[624px]">
        <div className="flex items-center justify-end font-['DejaVu_Sans_Mono',monospace] text-[44px] font-bold leading-none">
          <span className="mr-[6px] pt-[5px]">№</span>
          <div className="flex h-[58px] w-[38px] shrink-0 items-center justify-center border border-black pt-[2px]">8</div>
        </div>
        <Glyph w={19} h={40} className="ml-[44px] mt-[26px]">
          <path d="M18 3Q14 -1 11.500 6L7 34Q5 41 1 37" strokeWidth="2.400" />
          <ellipse cx="9.500" cy="20.500" rx="8" ry="7.500" strokeWidth="2" />
        </Glyph>
      </div>

      <div className="w-[63px] shrink-0">
        <div className="flex h-[62px] items-center pl-[11px]">
          <Glyph w={39} h={37}>
            <rect x="1.500" y="1.500" width="35.500" height="34" strokeWidth="3.300" />
            <circle cx="19" cy="11" r="5.800" strokeWidth="3.400" />
            <path d="M19 17V31M19 28H25" strokeWidth="4" />
          </Glyph>
        </div>
        <div className="h-[376px] bg-black text-white">
          <Disc className="text-[39px]">7</Disc>
          <div className="h-[62.500px] pl-[7px] pt-[1px]">
            <Glyph w={59} h={50}><path d="M29.500 5 55.500 47.500H3.500Z" strokeWidth="5" /></Glyph>
          </div>
          <Disc className="text-[46px]"><span className="-mt-[8px]">m</span></Disc>
          <div className="h-[62.500px] pl-[15px] pt-[13px]">
            <Glyph w={37} h={37}>
              <ellipse cx="18.500" cy="18" rx="14.500" ry="14.800" strokeWidth="5.500" />
              <path d="M3 35 34 2" strokeWidth="5" />
            </Glyph>
          </div>
          <div className="h-[62.500px] pl-[13px] pt-[11px]">
            <Glyph w={41} h={41}><circle cx="20.500" cy="20.500" r="18" strokeWidth="5" /></Glyph>
          </div>
          <Disc className="text-[39px]">5</Disc>
        </div>
        <div className="mt-[61px] flex h-[251px] bg-black">
          <div className="flex w-[33px] flex-col pl-[2px] pt-[120px]">
            <div className="flex h-[5px] w-[28px] gap-px"><div className="w-[7px] bg-white" /><div className="flex-1 bg-white" /></div>
          </div>
          <div className="flex w-[29px] flex-col pb-px pt-px">
            <div className="flex-1 bg-[#0000ff]" />
            <div className="mt-px h-[4px] bg-white" />
          </div>
        </div>
      </div>

      <div className="w-[501px] shrink-0">
        <div className="grid h-[62px] grid-cols-[repeat(8,62.5px)] border-y border-black bg-white">
          {Array.from({ length: 8 }, (_, i) => (
            <div key={i} className="flex items-center justify-center border-l border-black">
              {i === 0 && <div className="size-[34px] bg-black" />}
            </div>
          ))}
        </div>
        <div className="grid h-[4px] grid-cols-[repeat(8,62.5px)]">
          {Array.from({ length: 8 }, (_, i) => <div key={i} className="border-l border-black" />)}
        </div>
        <ChordRow cells={chordRows[0]} />
        <SliderRow />
        <ChordRow cells={chordRows[1]} />
        <SliderRow />
        <ChordRow cells={chordRows[2]} />
        <SliderRow />
        <ChordRow cells={chordRows[3]} lead="leading-[59px]" />
        <div className="grid h-[126px] grid-cols-[repeat(8,62.5px)] bg-black">
          {levels.map((y, i) => (
            <div key={i} className={`relative ${i < 7 ? "border-r border-white" : ""}`}>
              <div className="absolute left-[1px] h-[5px] w-[59px] bg-white" style={{ top: y }} />
            </div>
          ))}
        </div>
        <div className="flex h-[63px] justify-end bg-black pr-[15px] pt-[14px]"><div className="size-[34px] bg-white" /></div>
        <div className="grid grid-cols-[repeat(8,62.5px)] justify-items-center">
          {Array.from({ length: 8 }, (_, i) => (
            <StepNumber key={i} n={i + 1} className="h-[50px] w-[51px] text-[49px]" />
          ))}
        </div>
      </div>

      <div className="w-[63px] shrink-0">
        <Warn className="h-[63px] w-[63px] bg-[#ff8200]" />
        <IconCell className="bg-[#0000ff] text-white"><path d="M27 9.500 36.500 20 27.500 29 37 37 27.500 45.500 36 55" strokeWidth="4.500" /></IconCell>
        <IconCell className="bg-white"><path d="M22.500 6 30 31 22.500 56M36.500 6 44.500 31 36.500 56" strokeWidth="6.500" /></IconCell>
        <IconCell className="bg-white"><path d="M15 16.500 29.500 32 15 47.500M33.500 16.500 48 32 33.500 47.500" strokeWidth="7.500" /></IconCell>
        <IconCell className="bg-[#0000ff] text-white">
          <path d="M17 16H48L32.500 53Z" strokeWidth="4" />
          <path d="M15 36Q22 26 30 33T48 33" strokeWidth="4" />
        </IconCell>
        <IconCell className="bg-white"><path d="M14 14 45 24.500 14 34ZM49 29V50.500L20 40Z" strokeWidth="3.200" /></IconCell>
        <IconCell className="bg-white"><path d="M20.500 14.500H43.500L22 51M20.500 14.500 42 51M20.500 51H43.500" strokeWidth="3.800" /></IconCell>
        <Warn className="h-[62px] w-[63px] bg-[#ff8200]" />
        <div className="flex h-[251px] gap-[2px] border-x border-black bg-black pt-px">
          <div className="flex w-[30px] flex-col pb-px">
            <div className="flex-1 bg-[#0000ff]" />
            <div className="mt-px h-[4px] bg-white" />
          </div>
          <div className="flex flex-1 flex-col justify-end pb-px"><div className="h-[4px] bg-white" /></div>
        </div>
      </div>
      <Glyph w={23} h={26} className="ml-[6px] mt-[717px]">
        {[0, 9, 18].map((y) => (
          <path key={y} d={`M1.500 ${y + 6}C3 ${y} 7 ${y} 11.500 ${y + 3.500}S20 ${y + 7} 21.500 ${y + 1}`} strokeWidth="3.600" />
        ))}
      </Glyph>
    </div>
  );
}

export default function App() {
  return (
    <div className="h-[1440px] w-[2560px] overflow-hidden bg-white text-black">
      <TitleBar />
      <MenuBar />
      <HeaderStrip />
      <div className="flex items-start">
        <div className="w-[814px] shrink-0">
          <Modulator m={modulators[0]} />
          <Sequencer s={sequencers[0]} />
        </div>
        <div className="w-[813px] shrink-0">
          <Modulator m={modulators[1]} />
          <Harmony />
        </div>
        <div className="w-[932px] shrink-0">
          <Modulator m={modulators[2]} />
          <Sequencer s={sequencers[1]} />
        </div>
      </div>
    </div>
  );
}
